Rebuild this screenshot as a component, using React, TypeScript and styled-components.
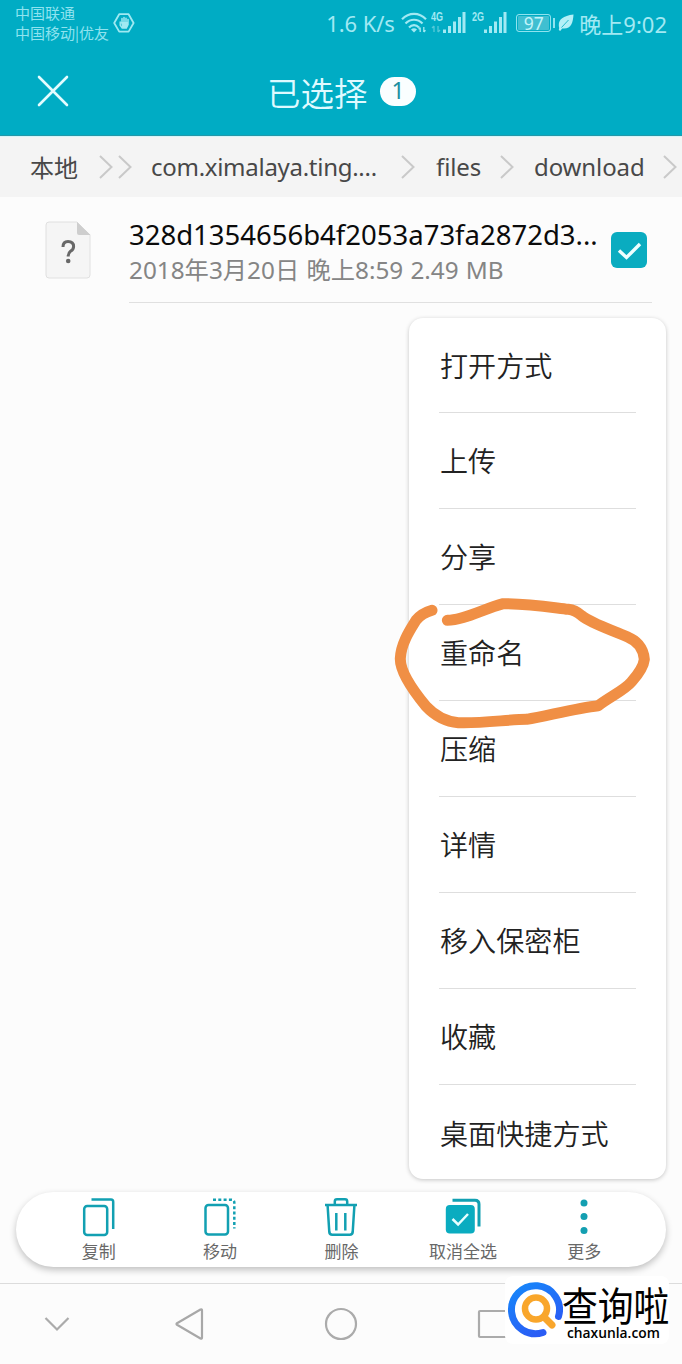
import React from "react";
import styled, { createGlobalStyle } from "styled-components";

const sans = `"Noto Sans", "Noto Sans CJK SC", sans-serif`;
const cjk = `"Noto Sans CJK SC", sans-serif`;
const teal = "#00acc4";
const tealIcon = "#12a0b2";

const GlobalStyle = createGlobalStyle`
  * { box-sizing: border-box; }
  body { margin: 0; background: #fcfcfc; font-family: ${sans}; }
  svg { display: block; flex: none; }
`;

const Screen = styled.div`
  position: relative;
  width: 682px;
  height: 1364px;
  display: flex;
  flex-direction: column;
  background: #fcfcfc;
  overflow: hidden;
  white-space: nowrap;
`;

const Header = styled.header`
  height: 136px;
  flex: none;
  background: ${teal};
  border-bottom: 1px solid #2497a8;
  color: #dffaff;
`;

const StatusBar = styled.div`
  height: 46px;
  display: flex;
  align-items: center;
  padding: 0 15px;
  color: #a2e9f3;
`;

const Carriers = styled.div`
  font-family: ${cjk};
  font-size: 15px;
  line-height: 20px;
  width: 98px;
  color: #8fe3ef;
`;

const StatusRight = styled.div`
  margin-left: auto;
  display: flex;
  align-items: center;
  font-size: 22px;
  padding-top: 1px;

  > svg { margin-bottom: 3px; }
`;

const Speed = styled.span`
  width: 69px;
  margin: 0 6px 2px 0;
  letter-spacing: -0.1px;
`;

const Clock = styled.span`
  margin: 0 0 2px 5px;
`;

const Signal = styled.div<{ $gap: number }>`
  display: flex;
  justify-content: space-between;
  margin: 0 0 3px ${(p) => p.$gap}px;
  width: 35px;
  height: 22px;
  align-items: flex-end;
`;

const SignalType = styled.span`
  font: 700 12px/12px "Liberation Sans", sans-serif;
  width: 11px;
  align-self: flex-start;
  transform: scaleX(0.75);
  transform-origin: left;
`;

const Battery = styled.div`
  width: 35px;
  height: 18px;
  border: 1px solid #8fe3ef;
  border-radius: 3px;
  display: flex;
  align-items: center;
  justify-content: center;
  margin: 0 0 2px 9px;
  font-size: 17.5px;
  line-height: 16px;
  color: #c4f4fa;
  background: #40bfd1;
  box-shadow: inset 0 0 0 1px ${teal};
`;

const BatteryTip = styled.div`
  width: 2px;
  height: 10px;
  background: #8fe3ef;
  margin: 0 3px 2px 2px;
`;

const TitleBar = styled.div`
  height: 90px;
  display: flex;
  align-items: center;
  padding-left: 37px;
`;

const Title = styled.h1`
  margin: 0 0 0 198px;
  width: 102px;
  font-family: ${cjk};
  font-size: 33.5px;
  line-height: 40px;
  font-weight: 350;
  padding-top: 2px;
`;

const CountBadge = styled.span`
  margin-left: 11px;
  width: 36px;
  height: 29px;
  border-radius: 15px;
  background: #fafeff;
  color: #1d8fa0;
  font-size: 23px;
  line-height: 27px;
  text-align: center;
`;

const Breadcrumbs = styled.nav`
  height: 61px;
  flex: none;
  display: flex;
  align-items: center;
  background: #f4f4f4;
  border-top: 1px solid #d5f5f8;
  padding-left: 30px;
  color: #484848;
  font-size: 24px;
`;

const Crumb = styled.span<{ $w: number; $tight?: boolean }>`
  width: ${(p) => p.$w}px;
  font-size: 24px;
  letter-spacing: ${(p) => (p.$tight ? "-0.28px" : "-0.1px")};
  padding-bottom: 1px;
`;

const Chevrons = styled.span<{ $l: number; $r: number }>`
  display: flex;
  gap: 5px;
  margin: 0 ${(p) => p.$r}px 0 ${(p) => p.$l}px;
`;

const FileRow = styled.section`
  height: 106px;
  flex: none;
  display: flex;
  padding-left: 45px;
`;

const FileIcon = styled.div`
  padding-top: 24px;
  width: 84px;
`;

const FileBody = styled.div`
  width: 523px;
  display: flex;
  justify-content: space-between;
  border-bottom: 1px solid #e0e0e0;
`;

const FileName = styled.div`
  margin-top: 19px;
  font-size: 27.5px;
  line-height: 38px;
  color: #0b0b0b;
`;

const FileMeta = styled.div`
  font-size: 24.3px;
  line-height: 32px;
  word-spacing: 0.9px;
  color: #858585;
`;

const Checkbox = styled.div`
  width: 36px;
  height: 36px;
  margin: 35px 5px 0 0;
  border-radius: 6px;
  background: #0aacc0;
`;

const Spacer = styled.div`
  flex: 1;
`;

const Menu = styled.ul`
  position: absolute;
  left: 409px;
  top: 318px;
  width: 257px;
  height: 861px;
  margin: 0;
  padding: 0 30px;
  list-style: none;
  background: #fff;
  border-radius: 14px;
  box-shadow: 0 1px 4px rgba(0, 0, 0, 0.22);
`;

const MenuItem = styled.li`
  height: 96px;
  display: flex;
  align-items: center;
  padding: 0 0 2px 1px;
  font-family: ${cjk};
  font-weight: 350;
  font-size: 28.1px;
  color: #222;
  border-bottom: 1px solid #dedede;
  &:first-child { height: 95px; }
  &:last-child { border-bottom: 0; }
`;

const CircleMark = styled.svg`
  position: absolute;
  left: 380px;
  top: 590px;
`;

const Toolbar = styled.div`
  flex: none;
  height: 75px;
  margin: 0 16px 16px;
  padding: 5px 21px 0 22px;
  display: grid;
  grid-template-columns: repeat(5, 1fr);
  border-radius: 38px;
  background: #fff;
  box-shadow: 0 3px 7px rgba(0, 0, 0, 0.24);
`;

const Tool = styled.div`
  display: flex;
  flex-direction: column;
  align-items: center;
  color: #686868;
  font-size: 17px;
  line-height: 24px;
  gap: 3px;
`;

const NavBar = styled.footer`
  flex: none;
  height: 81px;
  border-top: 1px solid #dcdcdc;
  display: flex;
  align-items: center;
  padding-left: 43px;
  gap: 115px;

  > :first-child { margin-right: -14px; }
`;

const Watermark = styled.div`
  position: absolute;
  left: 505px;
  top: 1276px;
  width: 164px;
  height: 68px;
  background: #fff;
  border-radius: 8px;
  display: flex;
  padding: 4px 0 0 2px;
`;

const Brand = styled.div`
  margin-left: -1px;
  color: #000;
`;

const BrandName = styled.div`
  font: 400 35.8px/38px ${cjk};
  margin-top: 4px;
  height: 38px;
  transform: scaleY(1.12);
`;

const BrandUrl = styled.div`
  font: 600 13.8px/18px "Open Sans", sans-serif;
  margin: 2px 0 0 5px;
`;

const Chevron = () => (
  <svg width="14" height="24" viewBox="0 0 14 24" fill="none" stroke="#c9c9c9" strokeWidth="2">
    <path d="M1 1 L12.5 12 L1 23" />
  </svg>
);

const HandIcon = () => (
  <svg width="22" height="20" viewBox="0 0 22 20" fill="none" stroke="#9fe9f2" strokeWidth="1.8">
    <path d="M6.2 1.2H15.6L20.6 10L15.6 18.6H6.2L1.2 10Z" strokeLinejoin="round" />
    <path d="M7.2 9V12.2L9.2 15H13.3L15 11.5V6.5M9 10V5.5M11 10V4.5M13 10V5.2" strokeWidth="1.5" strokeLinecap="round" />
    <path d="M8 9H15V12L13.3 15H9.2Z" fill="#9fe9f2" stroke="none" />
  </svg>
);

const WifiIcon = () => (
  <svg width="26" height="21" viewBox="0 0 26 21" fill="none" stroke="#a2e9f3" strokeWidth="2.2">
    <path d="M1 7.2C8 .2 18 .2 25 7.2M4.5 11.5C9.5 6.5 16.5 6.5 21.5 11.5M8 15.5C11 12.4 15 12.4 18 15.5" />
    <path d="M10 17.5Q13 15 16 17.5L13 20.6Z" fill="#a2e9f3" stroke="none" />
    <path d="M19.2 20V15.5M17.6 17.2L19.2 15.5M22.8 15V20M24.5 18.3L22.8 20" strokeWidth="1.3" />
  </svg>
);

const Bars = ({ arrows }: { arrows?: boolean }) => (
  <svg width="24" height="22" viewBox="0 0 24 22" fill="#a2e9f3" overflow="visible">
    <path d="M1 18.5h3V22h-3zM6 15h3v7h-3zM11 10.5h3V22h-3zM16 6h3v16h-3zM20.5 1h3v21h-3z" />
    {arrows && <path d="M-8 21V15M-10 17l2-2M-4 15v6M-2 19l-2 2" fill="none" stroke="#55c9d9" strokeWidth="1.3" />}
  </svg>
);

const LeafIcon = () => (
  <svg width="16" height="17" viewBox="0 0 16 17">
    <path d="M1.2 14C-.5 7 3 2 15.5.5C15 9 13 15.5 4.2 14.4L2.2 17L.8 16Z" fill="#b4f0f7" />
    <path d="M3.5 13.5L10.5 6" stroke={teal} strokeWidth="0.8" />
  </svg>
);

const toolIcon = { width: 36, height: 40, viewBox: "0 0 36 40", fill: "none", stroke: tealIcon, strokeWidth: 2.5 };

const CopyIcon = () => (
  <svg {...toolIcon}>
    <rect x="3.2" y="9" width="23" height="29" rx="3" />
    <path d="M10.5 2.5H30Q32.2 2.5 32.2 4.8V32" />
  </svg>
);

const MoveIcon = () => (
  <svg {...toolIcon}>
    <rect x="3.5" y="8" width="22.5" height="29.5" rx="3" />
    <path d="M11 2.8H29.5Q32.3 2.8 32.3 5.5V31.5" strokeDasharray="3 2.3" />
  </svg>
);

const TrashIcon = () => (
  <svg {...toolIcon}>
    <path d="M2 8H34M11.8 7.5V4.5Q11.8 2.3 14 2.3H22Q24.2 2.3 24.2 4.5V7.5M4.6 8.5L6.3 35Q6.6 37.7 9.2 37.7H26.8Q29.4 37.7 29.7 35L31.4 8.5M13.3 16V33.5M22.3 16V33.5" />
  </svg>
);

const DeselectIcon = () => (
  <svg {...toolIcon}>
    <rect x="0.8" y="8" width="29" height="28.5" rx="4" fill="#0aacc0" stroke="none" />
    <path d="M7.5 3.3H30Q34 3.3 34 7.3V29.5" strokeWidth="3" />
    <path d="M7.5 22L13.1 27.5L23 17" stroke="#e7ffff" strokeWidth="2.5" />
  </svg>
);

const MoreIcon = () => (
  <svg {...toolIcon} fill="#139fb1" stroke="none">
    <circle cx="18" cy="6" r="3.5" />
    <circle cx="18" cy="19.5" r="3.5" />
    <circle cx="18" cy="33.5" r="3.5" />
  </svg>
);

const menuItems = ["打开方式", "上传", "分享", "重命名", "压缩", "详情", "移入保密柜", "收藏", "桌面快捷方式"];

const tools = [
  { label: "复制", Icon: CopyIcon },
  { label: "移动", Icon: MoveIcon },
  { label: "删除", Icon: TrashIcon },
  { label: "取消全选", Icon: DeselectIcon },
  { label: "更多", Icon: MoreIcon },
];

export default function App() {
  return (
    <>
      <GlobalStyle />
      <Screen>
        <Header>
          <StatusBar>
            <Carriers>
              <div>中国联通</div>
              <div>中国移动|优友</div>
            </Carriers>
            <HandIcon />
            <StatusRight>
              <Speed>1.6 K/s</Speed>
              <WifiIcon />
              <Signal $gap={4}>
                <SignalType>4G</SignalType>
                <Bars arrows />
              </Signal>
              <Signal $gap={6}>
                <SignalType>2G</SignalType>
                <Bars />
              </Signal>
              <Battery>97</Battery>
              <BatteryTip />
              <LeafIcon />
              <Clock>晚上9:02</Clock>
            </StatusRight>
          </StatusBar>
          <TitleBar>
            <svg width="32" height="32" viewBox="0 0 32 32" stroke="#e4fcff" strokeWidth="2.6" strokeLinecap="round">
              <path d="M2 2L30 30M30 2L2 30" />
            </svg>
            <Title>已选择</Title>
            <CountBadge>1</CountBadge>
          </TitleBar>
        </Header>
        <Breadcrumbs>
          <Crumb $w={49}>本地</Crumb>
          <Chevrons $l={20} $r={19}><Chevron /><Chevron /></Chevrons>
          <Crumb $w={227} $tight>com.ximalaya.ting....</Crumb>
          <Chevrons $l={23} $r={21}><Chevron /></Chevrons>
          <Crumb $w={45}>files</Crumb>
          <Chevrons $l={19} $r={20}><Chevron /></Chevrons>
          <Crumb $w={110}>download</Crumb>
          <Chevrons $l={19} $r={0}><Chevron /></Chevrons>
        </Breadcrumbs>
        <FileRow>
          <FileIcon>
            <svg width="46" height="58" viewBox="0 0 46 58">
              <path d="M4 1H32L45 14V54Q45 57 42 57H4Q1 57 1 54V4Q1 1 4 1Z" fill="#f5f5f5" stroke="#e0e0e0" />
              <path d="M32 1L45.5 14H34Q32 14 32 12Z" fill="#cecece" />
              <path d="M18 26Q18 20.5 23 20.5Q28.6 20.5 28.6 25.5Q28.6 28.5 25.5 30.3Q23.2 31.9 23.2 35.5" fill="none" stroke="#686868" strokeWidth="3" />
              <circle cx="23.2" cy="40" r="2.3" fill="#686868" />
            </svg>
          </FileIcon>
          <FileBody>
            <div>
              <FileName>328d1354656b4f2053a73fa2872d3...</FileName>
              <FileMeta>2018年3月20日 晚上8:59 2.49 MB</FileMeta>
            </div>
            <Checkbox>
              <svg width="36" height="36" viewBox="0 0 36 36" fill="none" stroke="#efffff" strokeWidth="3.4">
                <path d="M8 18.5L15.5 25.5L29 12" />
              </svg>
            </Checkbox>
          </FileBody>
        </FileRow>
        <Spacer />
        <Toolbar>
          {tools.map(({ label, Icon }) => (
            <Tool key={label}>
              <Icon />
              {label}
            </Tool>
          ))}
        </Toolbar>
        <NavBar>
          <svg width="28" height="36" viewBox="0 0 28 36" fill="none" stroke="#ababab" strokeWidth="2.2">
            <path d="M2.5 12L14 23.5L25.5 12" />
          </svg>
          <svg width="36" height="36" viewBox="0 0 36 36" fill="none" stroke="#a8a8a8" strokeWidth="2.2" strokeLinejoin="round">
            <path d="M28.5 3.5Q30 3 30 4.5V31.5Q30 33 28.5 32.5L5 18.8Q4 18 5 17.2Z" />
          </svg>
          <svg width="36" height="36" viewBox="0 0 36 36" fill="none" stroke="#ababab" strokeWidth="2.2">
            <circle cx="18" cy="18" r="15" />
          </svg>
          <svg width="36" height="36" viewBox="0 0 36 36" fill="none" stroke="#ababab" strokeWidth="2.2">
            <rect x="5" y="5" width="28" height="26" rx="1" />
          </svg>
        </NavBar>
        <Menu>
          {menuItems.map((t) => <MenuItem key={t}>{t}</MenuItem>)}
        </Menu>
        <CircleMark width="302" height="150" viewBox="0 0 906 450" fill="none" stroke="#f08f45" strokeWidth="33" strokeLinecap="round" strokeLinejoin="round">
          <path d="M156 61Q125 70 108 91C90 120 63 160 61 205C59 250 110 315 138 349Q180 394 235 398C300 401 390 388 440 388C500 378 590 354 655 347C690 320 735 300 755 275Q790 235 793 208C790 170 765 150 745 142C700 121 640 104 605 77Q585 60 565 58C520 53 450 41 370 41C310 57 250 91 202 91" />
        </CircleMark>
        <Watermark>
          <svg width="56" height="58" viewBox="0 0 56 58" fill="none" strokeLinecap="round">
            <defs>
              <linearGradient id="ring" x1="0" y1="0" x2="0.6" y2="1">
                <stop offset="0" stopColor="#1688fa" />
                <stop offset="1" stopColor="#2a5cf5" />
              </linearGradient>
            </defs>
            <path d="M51.5 36.5A24 24 0 1 0 36 52.5" stroke="url(#ring)" strokeWidth="7" />
            <circle cx="29" cy="28.5" r="11" stroke="#f9a62b" strokeWidth="6.5" />
            <path d="M37 37L45 45" stroke="#f9a62b" strokeWidth="7" />
          </svg>
          <Brand>
            <BrandName>查询啦</BrandName>
            <BrandUrl>chaxunla.com</BrandUrl>
          </Brand>
        </Watermark>
      </Screen>
    </>
  );
}
